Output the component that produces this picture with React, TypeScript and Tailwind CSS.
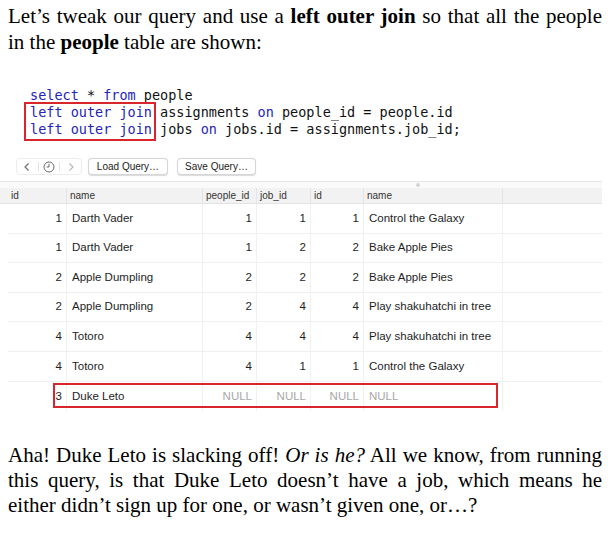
import React from 'react';

type Cell = number | string | null;

const columns = [
  { label: 'id', w: 'w-[67px]', num: true },
  { label: 'name', w: 'w-[136px]', num: false },
  { label: 'people_id', w: 'w-[54px]', num: true },
  { label: 'job_id', w: 'w-[54px]', num: true },
  { label: 'id', w: 'w-[53px]', num: true },
  { label: 'name', w: 'w-[139px]', num: false },
];

const rows: Cell[][] = [
  [1, 'Darth Vader', 1, 1, 1, 'Control the Galaxy'],
  [1, 'Darth Vader', 1, 2, 2, 'Bake Apple Pies'],
  [2, 'Apple Dumpling', 2, 2, 2, 'Bake Apple Pies'],
  [2, 'Apple Dumpling', 2, 4, 4, 'Play shakuhatchi in tree'],
  [4, 'Totoro', 4, 4, 4, 'Play shakuhatchi in tree'],
  [4, 'Totoro', 4, 1, 1, 'Control the Galaxy'],
  [3, 'Duke Leto', null, null, null, null],
];

function Kw({ children }: { children: React.ReactNode }) {
  return <span className="text-[#2424b8]">{children}</span>;
}

function ClockIcon() {
  return (
    <svg width="12" height="12" viewBox="0 0 12 12" fill="none" stroke="#6b6b6b" strokeWidth="1">
      <circle cx="6" cy="6" r="5" />
      <path d="M6 3.2V6H4" strokeLinecap="round" />
    </svg>
  );
}

function Chevron({ dir, color }: { dir: 'l' | 'r'; color: string }) {
  return (
    <svg width="8" height="10" viewBox="0 0 8 10" fill="none" stroke={color} strokeWidth="1.1">
      {dir === 'l' ? <path d="M5.5 1.5 2 5l3.5 3.5" /> : <path d="M2.5 1.5 6 5 2.5 8.5" />}
    </svg>
  );
}

function Toolbar() {
  return (
    <div className="flex items-center h-[17px] pl-[16px] gap-[6px] font-['Liberation_Sans',sans-serif] text-[10px] text-[#222]">
      <div className="flex items-center h-[17px] w-[66px] border border-[#ececec] rounded-[4px]">
        <div className="flex-1 flex justify-center">
          <Chevron dir="l" color="#666" />
        </div>
        <div className="w-px h-[9px] bg-[#e2e2e2]" />
        <div className="flex-1 flex justify-center">
          <ClockIcon />
        </div>
        <div className="w-px h-[9px] bg-[#e2e2e2]" />
        <div className="flex-1 flex justify-center">
          <Chevron dir="r" color="#b5b5b5" />
        </div>
      </div>
      <div className="h-[17px] w-[80px] flex items-center justify-center rounded-[4px] border border-[#d6d6d6] bg-white shadow-[0_0.5px_1px_rgba(0,0,0,0.15)]">
        Load Query…
      </div>
      <div className="ml-[3px] h-[17px] w-[79px] flex items-center justify-center rounded-[4px] border border-[#d6d6d6] bg-white shadow-[0_0.5px_1px_rgba(0,0,0,0.15)]">
        Save Query…
      </div>
    </div>
  );
}

function ResultTable() {
  return (
    <div className="w-[602px] font-['Liberation_Sans',sans-serif]">
      <div className="h-[7px] border-t border-[#e6e6e6] bg-[#fafafa] relative">
        <div className="absolute left-[416px] top-[1px] w-[4px] h-[4px] rounded-full bg-[#d4d4d4]" />
      </div>
      <div className="flex h-[16px] bg-[#f2f2f2] border-b border-[#e3e3e3] text-[10px] text-[#333]">
        {columns.map((c, i) => (
          <div key={i} className={`${c.w} flex items-center border-r border-[#e4e4e4] ${i === 0 ? 'pl-[11px]' : 'pl-[3px]'}`}>
            {c.label}
          </div>
        ))}
        <div className="flex-1" />
      </div>
      {rows.map((r, ri) => (
        <div
          key={ri}
          className={`relative flex h-[29.6px] ml-[8px] text-[11.5px] text-[#1e1e1e] ${
            ri < rows.length - 1 ? 'border-b border-[#efefef]' : ''
          }`}
        >
          {columns.map((c, ci) => {
            const v = r[ci];
            const isNull = v === null;
            return (
              <div
                key={ci}
                className={`${ci === 0 ? 'w-[59px]' : c.w} flex items-center border-r border-[#f1f1f1] ${
                  c.num ? 'justify-end pr-[4px]' : 'pl-[5px]'
                } ${isNull ? 'text-[#a8a8a8]' : ''}`}
              >
                {isNull ? 'NULL' : v}
              </div>
            );
          })}
          <div className="flex-1" />
          {ri === rows.length - 1 && (
            <div className="absolute left-[45px] top-[1.5px] w-[445px] h-[25px] border-2 border-[#d8262c]" />
          )}
        </div>
      ))}
    </div>
  );
}

export default function App() {
  return (
    <div className="w-[610px] h-[535px] bg-white overflow-hidden text-black">
      <div className="px-[8px] pt-[3px] font-['Liberation_Serif',serif] text-[21px] leading-[26px]">
        <div className="text-justify [text-align-last:justify] whitespace-nowrap">
          Let’s tweak our query and use a <b>left outer join</b> so that all the people
        </div>
        <div>
          in the <b>people</b> table are shown:
        </div>
      </div>

      <div className="relative mt-[32px] pl-[30px] font-['DejaVu_Sans_Mono',monospace] text-[13.5px] leading-[17px] text-[#111] whitespace-pre">
        <div>
          <Kw>select</Kw> * <Kw>from</Kw> people
        </div>
        <div>
          <Kw>left outer join</Kw> assignments <Kw>on</Kw> people_id = people.id
        </div>
        <div>
          <Kw>left outer join</Kw> jobs <Kw>on</Kw> jobs.id = assignments.job_id;
        </div>
        <div className="absolute left-[24px] top-[15px] w-[132px] h-[39px] border-2 border-[#d8262c]" />
      </div>

      <div className="mt-[20px]">
        <Toolbar />
      </div>

      <div className="mt-[6px]">
        <ResultTable />
      </div>

      <div className="mt-[32px] px-[8px] font-['Liberation_Serif',serif] text-[21px] leading-[25px]">
        <div className="text-justify [text-align-last:justify] whitespace-nowrap">
          Aha! Duke Leto is slacking off! <i>Or is he?</i> All we know, from running
        </div>
        <div className="text-justify [text-align-last:justify] whitespace-nowrap">
          this query, is that Duke Leto doesn’t have a job, which means he
        </div>
        <div>either didn’t sign up for one, or wasn’t given one, or…?</div>
      </div>
    </div>
  );
}
